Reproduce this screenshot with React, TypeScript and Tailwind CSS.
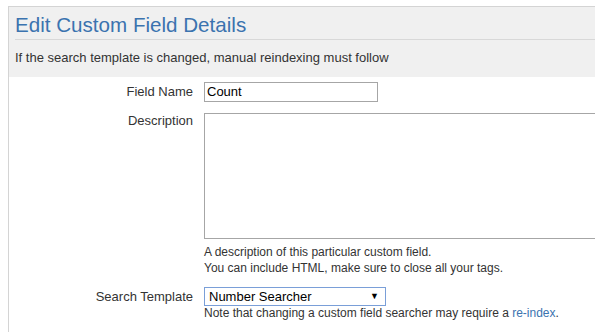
import React from 'react';

const font = { fontFamily: '"Liberation Sans", Arial, sans-serif' };

export default function App() {
  return (
    <div className="w-[595px] h-[332px] overflow-hidden bg-white text-[13px] text-[#333]" style={font}>
      <div className="ml-2 mt-[6px] border-l border-t border-[#d4d4d4] w-[700px] h-[400px]">
        {/* header */}
        <div className="bg-[#f0f0f0] pl-[6px] pt-[5px] h-[70px]">
          <h2 className="text-[20.6px] leading-[26px] text-[#3b73af] font-normal pb-[1px] border-b border-[#d8d8d8]">
            Edit Custom Field Details
          </h2>
          <p className="mt-[10px] leading-[16px]">If the search template is changed, manual reindexing must follow</p>
        </div>

        {/* form */}
        <div className="grid grid-cols-[184px_1fr] gap-x-[11px] pt-[5px]">
          <label className="text-right leading-[20px]">Field Name</label>
          <div className="w-[174px] h-[20px] border border-[#a6a6a6] px-[2px] leading-[18px] text-black">Count</div>

          <label className="text-right leading-[16px] mt-[11px]">Description</label>
          <div className="mt-[11px]">
            <div className="w-[420px] h-[126px] border border-[#a6a6a6]" />
            <div className="mt-[5px] leading-[16px] text-[12px]">
              <div>A description of this particular custom field.</div>
              <div>You can include HTML, make sure to close all your tags.</div>
            </div>
          </div>

          <label className="text-right leading-[19px] mt-[11px]">Search Template</label>
          <div className="mt-[11px]">
            <div className="w-[182px] h-[19px] border border-[#7a9fd8] pl-[4px] pr-[6px] flex items-center justify-between text-black leading-[17px]">
              <span>Number Searcher</span>
              <span className="text-[9px]">▼</span>
            </div>
            <div className="leading-[15px] text-[12px]">
              Note that changing a custom field searcher may require a{' '}
              <a className="text-[#3b73af]">re-index</a>.
            </div>
          </div>
        </div>
      </div>
    </div>
  );
}
